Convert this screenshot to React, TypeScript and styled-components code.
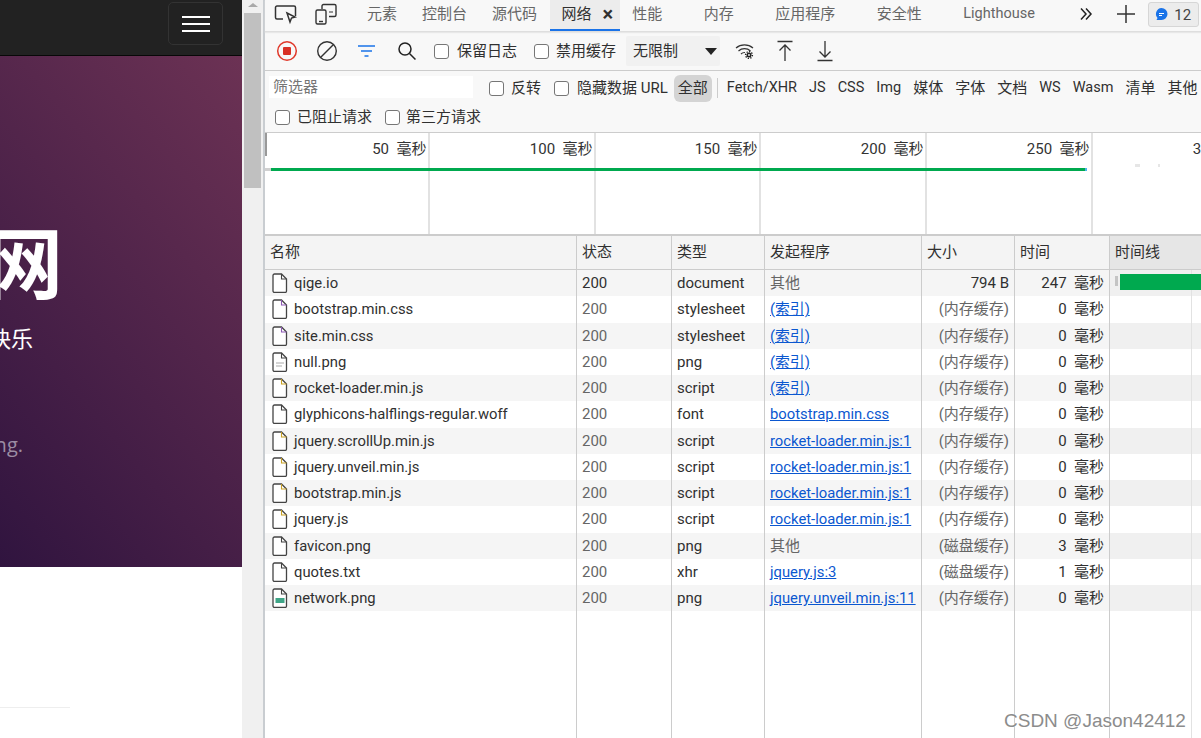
import React from "react";
import styled, {createGlobalStyle} from "styled-components";

const GlobalStyle = createGlobalStyle`
  html, body {
    margin: 0;
    padding: 0;
    width: 1201px;
    height: 738px;
    overflow: hidden;
    background: white;
  }
  * {
    box-sizing: border-box;
  }
`;

const UI_FONT = `Roboto, "Noto Sans CJK SC", sans-serif`;

const Shell = styled.div`
  display: flex;
  width: 1201px;
  height: 738px;
  overflow: hidden;
  font-family: ${UI_FONT};
  font-size: 15px;
  line-height: 20px;
  color: #303030;
`;

/* left: the inspected page */
const Page = styled.div`
  width: 242px;
  height: 738px;
  flex: none;
  display: flex;
  flex-direction: column;
  overflow: hidden;
  background: white;
`;

const NavBar = styled.div`
  height: 56px;
  flex: none;
  display: flex;
  justify-content: flex-end;
  align-items: flex-start;
  padding: 2px 19px 0 0;
  background: #222;
  border-bottom: 1px solid #080808;
`;

const NavToggle = styled.div`
  width: 55px;
  height: 43px;
  display: flex;
  flex-direction: column;
  justify-content: center;
  align-items: center;
  gap: 5px;
  border: 1px solid #333;
  border-radius: 5px;
`;

const NavBarLine = styled.span`
  width: 28px;
  height: 2px;
  background: white;
`;

const Hero = styled.div`
  height: 511px;
  flex: none;
  display: flex;
  flex-direction: column;
  align-items: flex-end;
  padding-top: 164px;
  background: linear-gradient(50deg, #30143f 0%, #6c3254 100%);
  color: white;
  white-space: nowrap;
`;

const HeroTitle = styled.div`
  margin-right: 179px;
  height: 94px;
  font-size: 78px;
  font-weight: 700;
  line-height: 94px;
`;

const HeroSub = styled.div`
  margin: 11px 209px 0 0;
  font-size: 22px;
  line-height: 30px;
`;

const HeroNote = styled.div`
  margin: 76px 219px 0 0;
  font-family: "Open Sans", sans-serif;
  font-size: 20px;
  line-height: 28px;
  color: #9c8da3;
`;

const PageRule = styled.div`
  width: 70px;
  height: 1px;
  margin-top: 140px;
  background: #eee;
`;

const ScrollTrack = styled.div`
  width: 21px;
  flex: none;
  display: flex;
  flex-direction: column;
  align-items: center;
  padding-top: 3px;
  background: #f0f0f0;
`;

const ScrollArrow = styled.span`
  width: 0;
  height: 0;
  border-left: 5px solid transparent;
  border-right: 5px solid transparent;
  border-bottom: 4px solid #a9a9a9;
`;

const ScrollThumb = styled.div`
  width: 17px;
  height: 175px;
  margin-top: 6px;
  background: #c0c0c0;
`;

const Divider = styled.div`
  width: 2px;
  flex: none;
  background: #c9cdd1;
`;

/* right: devtools */
const DevTools = styled.div`
  flex: 1;
  min-width: 0;
  display: flex;
  flex-direction: column;
  background: #f8f8f8;
`;

const TabBar = styled.div`
  height: 32px;
  flex: none;
  display: flex;
  align-items: stretch;
  border-bottom: 1px solid #dedede;
  box-shadow: 0 1px 1px #e8e8e8;
`;

const TabIcon = styled.div<{ $width: number }>`
  width: ${(p) => p.$width}px;
  flex: none;
  display: flex;
  align-items: center;
  justify-content: center;
  padding-bottom: 3px;
`;

const Tab = styled.div<{ $left: number; $right: number; $active?: boolean; $latin?: boolean }>`
  flex: none;
  display: flex;
  align-items: center;
  gap: 11px;
  padding: 0 ${(p) => p.$right}px 1px ${(p) => p.$left}px;
  font-size: ${(p) => (p.$latin ? 14.5 : 15)}px;
  color: ${(p) => (p.$active ? "#303030" : "#666")};
  background: ${(p) => (p.$active ? "#ececec" : "transparent")};
  border-bottom: 2px solid ${(p) => (p.$active ? "#1a73e8" : "transparent")};
`;

const TabClose = styled.span`
  font-size: 20px;
  font-weight: 700;
  line-height: 1;
`;

const Badge = styled.div`
  width: 51px;
  height: 25px;
  margin: 2px 0 0 12px;
  flex: none;
  display: flex;
  align-items: center;
  justify-content: center;
  gap: 6px;
  background: #ececec;
  border: 1px solid #d6d6d6;
  border-radius: 3px;
  color: #444;
`;

const Toolbar = styled.div`
  height: 39px;
  flex: none;
  display: flex;
  align-items: center;
  padding-left: 1.5px;
  border-bottom: 1px solid #ccc;
`;

const ToolButton = styled.div<{ $width: number }>`
  width: ${(p) => p.$width}px;
  flex: none;
  display: flex;
  align-items: center;
  justify-content: center;
`;

const Check = styled.label<{ $gap: number; $before?: number; $after?: number }>`
  display: flex;
  align-items: center;
  flex: none;
  gap: ${(p) => p.$gap}px;
  margin-left: ${(p) => p.$before || 0}px;
  margin-right: ${(p) => p.$after || 0}px;
  white-space: nowrap;
`;

const CheckBox = styled.input.attrs({type: "checkbox"})`
  appearance: none;
  width: 15px;
  height: 15px;
  margin: 0;
  background: white;
  border: 1px solid #767676;
  border-radius: 3px;
`;

const Throttle = styled.div`
  width: 94px;
  height: 30px;
  flex: none;
  display: flex;
  align-items: center;
  justify-content: space-between;
  margin-left: 10px;
  padding: 0 3px 0 7px;
  background: #f1f1f1;
  border-radius: 2px;
`;

const ThrottleArrow = styled.span`
  width: 0;
  height: 0;
  border-left: 6px solid transparent;
  border-right: 6px solid transparent;
  border-top: 7px solid #222;
`;

const FilterRow = styled.div`
  height: 31px;
  flex: none;
  display: flex;
  align-items: center;
  padding: 3px 0 0 4px;
`;

const FilterInput = styled.div`
  width: 204px;
  height: 22px;
  flex: none;
  margin: 0 16px 2px 0;
  padding-left: 4px;
  background: white;
  color: #757575;
  line-height: 22px;
`;

const AllPill = styled.div`
  width: 38px;
  height: 27px;
  flex: none;
  margin-left: 6px;
  background: #d4d4d4;
  border-radius: 6px;
  text-align: center;
  line-height: 27px;
`;

const FilterSeparator = styled.span`
  width: 1px;
  height: 20px;
  flex: none;
  margin: 0 9px 0 5px;
  background: #ccc;
`;

const FilterTypes = styled.div`
  display: flex;
  gap: 12px;
  white-space: nowrap;
`;

const FilterType = styled.span<{ $latin: boolean }>`
  font-size: ${(p) => (p.$latin ? 14.5 : 15)}px;
`;

const BlockedRow = styled.div`
  height: 30px;
  flex: none;
  display: flex;
  align-items: center;
  padding-left: 10px;
`;

const Overview = styled.div`
  position: relative;
  height: 102px;
  flex: none;
  display: flex;
  overflow: hidden;
  background: white;
  border-top: 1px solid #ccc;
`;

const OverviewCell = styled.div<{ $width: number }>`
  width: ${(p) => p.$width}px;
  flex: none;
  padding: 6px 1.5px 0 0;
  border-right: 2px solid #e2e2e2;
  text-align: right;
  white-space: pre;
  color: #333;
`;

const OverviewMark = styled.span`
  position: absolute;
  left: 0;
  top: 0;
  width: 2px;
  height: 23px;
  background: #999;
`;

const OverviewBar = styled.span`
  position: absolute;
  left: 6px;
  top: 35px;
  width: 814px;
  height: 3px;
  background: #00a94f;
`;

const OverviewTick = styled.span<{ $left: number; $width: number; $tone: string; $top: number }>`
  position: absolute;
  left: ${(p) => p.$left}px;
  top: ${(p) => p.$top}px;
  width: ${(p) => p.$width}px;
  height: 3px;
  background: ${(p) => p.$tone};
`;

const Table = styled.div`
  flex: 1;
  min-height: 0;
  display: flex;
  flex-direction: column;
  background: white;
`;

const COLUMNS = "312px 95px 93px 157px 93px 95px 91px";

const HeaderRow = styled.div`
  height: 36px;
  flex: none;
  display: grid;
  grid-template-columns: ${COLUMNS};
  background: #f4f4f4;
  border-top: 2px solid #ccc;
  border-bottom: 1px solid #ccc;
`;

const HeaderCell = styled.div<{ $sorted?: boolean }>`
  padding-left: 5px;
  line-height: 33px;
  border-right: 1px solid #ccc;
  background: ${(p) => (p.$sorted ? "#e6e6e6" : "transparent")};
  &:last-child {
    border-right: none;
  }
`;

const Row = styled.div<{ $striped: boolean }>`
  height: 26.25px;
  flex: none;
  display: grid;
  grid-template-columns: ${COLUMNS};
  background: ${(p) => (p.$striped ? "#f5f5f5" : "white")};
`;

const Cell = styled.div<{ $right?: boolean; $tone?: string }>`
  padding: 0 5px;
  display: flex;
  align-items: center;
  justify-content: ${(p) => (p.$right ? "flex-end" : "flex-start")};
  border-right: 1px solid #ccc;
  color: ${(p) => p.$tone || "#303030"};
  white-space: pre;
  overflow: hidden;
`;

const NameCell = styled(Cell)`
  gap: 6px;
  padding-left: 7px;
  font-size: 14.8px;
`;

const InitiatorLink = styled.span`
  color: #0b57d0;
  font-size: 14.8px;
  text-decoration: underline;
`;

const WaterfallCell = styled.div<{ $striped?: boolean }>`
  position: relative;
  background-image: linear-gradient(#e2e2e2, #e2e2e2);
  background-size: 1px 100%;
  background-position: 81px 0;
  background-repeat: no-repeat;
  background-color: ${(p) => (p.$striped ? "#f0f0f0" : "transparent")};
`;

const WaterfallStub = styled.span`
  position: absolute;
  left: 5px;
  top: 6px;
  width: 3px;
  height: 10px;
  background: #c4c4c4;
`;

const WaterfallBar = styled.span`
  position: absolute;
  left: 10px;
  top: 4px;
  right: 0;
  height: 16px;
  background: #00a94f;
`;

const FillerRow = styled.div`
  flex: 1;
  display: grid;
  grid-template-columns: ${COLUMNS};
`;

const FillerCell = styled.div`
  border-right: 1px solid #ccc;
`;

const Watermark = styled.div`
  position: absolute;
  left: 1004px;
  top: 708px;
  font-family: "Liberation Sans", Arial, sans-serif;
  font-size: 19px;
  line-height: 26px;
  color: #8c8c8c;
  text-shadow: 0 0 2px white;
  white-space: nowrap;
`;

const Frame = styled.div`
  position: relative;
`;

function FileIcon({kind}: { kind?: string }) {
    const fold = kind === "css" ? "#8e5bb5" : kind === "js" ? "#c9a227" : "#444";
    return (
        <svg width="16" height="20" viewBox="0 0 16 20" fill="none" style={{flex: "none"}}>
            <path d="M2.5 1h7l5 5v12a1.5 1.5 0 0 1-1.5 1.5h-10.5a1.5 1.5 0 0 1-1.5-1.500v-15.500a1.5 1.5 0 0 1 1.5-1.5z"
                  fill="white" stroke="#444" strokeWidth="1.3"/>
            <path d="M9.5 1v5h5" stroke={fold} strokeWidth="1.1"/>
            {kind === "null" && <path d="M4 11h8M4 14h6" stroke="#aaa"/>}
            {kind === "image" && <rect x="3.5" y="10" width="9" height="5" fill="#3fa587"/>}
        </svg>
    );
}

const inspectIcon = (
    <svg width="24" height="22" viewBox="0 0 24 22" fill="none" stroke="#333" strokeWidth="1.5">
        <path d="M9 16H3a1.5 1.5 0 0 1-1.5-1.5v-10A1.5 1.5 0 0 1 3 3h17a1.5 1.5 0 0 1 1.5 1.5V13"/>
        <path d="M13 10l8 4-3.5 1-1.5 4z" fill="white"/>
    </svg>
);

const deviceIcon = (
    <svg width="24" height="22" viewBox="0 0 24 22" fill="none" stroke="#333" strokeWidth="1.4">
        <path d="M8 6V3a1.5 1.5 0 0 1 1.5-1.5h11A1.5 1.5 0 0 1 22 3v9a1.5 1.5 0 0 1-1.5 1.5H15"/>
        <rect x="2" y="7" width="10" height="14" rx="1.5"/>
        <path d="M15 9h4" strokeWidth="1"/>
        <path d="M5 18.5h4"/>
    </svg>
);

const recordIcon = (
    <svg width="22" height="22" viewBox="0 0 22 22" fill="none">
        <circle cx="11" cy="11" r="9.3" stroke="#e0392b" strokeWidth="1.5"/>
        <rect x="7" y="7" width="8" height="8" rx="1" fill="#d93025"/>
    </svg>
);

const clearIcon = (
    <svg width="22" height="22" viewBox="0 0 22 22" fill="none" stroke="#333" strokeWidth="1.4">
        <circle cx="11" cy="11" r="9.3"/>
        <path d="M4.5 17.5l13-13"/>
    </svg>
);

const filterIcon = (
    <svg width="20" height="14" viewBox="0 0 20 14" fill="none" stroke="#1a73e8" strokeWidth="1.3">
        <path d="M1 2h17M4 7h11M7.5 12h4"/>
    </svg>
);

const searchIcon = (
    <svg width="20" height="20" viewBox="0 0 20 20" fill="none" stroke="#222" strokeWidth="1.5">
        <circle cx="8" cy="8" r="6"/>
        <path d="M12.5 12.5l6 6"/>
    </svg>
);

const wifiIcon = (
    <svg width="20" height="18" viewBox="0 0 20 18" fill="none" stroke="#333" strokeWidth="1.2">
        <path d="M1 6a13 13 0 0 1 17 0M3.5 9a9 9 0 0 1 12 0M6 12a5 5 0 0 1 4-1.5"/>
        <circle cx="14" cy="13" r="2.5" fill="#222" stroke="none"/>
        <circle cx="14" cy="13" r="3.4" stroke="#222" strokeWidth="1.4" strokeDasharray="1.3 1.3"/>
        <circle cx="14" cy="13" r="0.9" fill="white" stroke="none"/>
    </svg>
);

const uploadIcon = (
    <svg width="18" height="22" viewBox="0 0 18 22" fill="none" stroke="#333" strokeWidth="1.3">
        <path d="M1.5 1.5h15M9 21V5M3.5 10.5L9 5l5.5 5.5"/>
    </svg>
);

const downloadIcon = (
    <svg width="18" height="22" viewBox="0 0 18 22" fill="none" stroke="#333" strokeWidth="1.3">
        <path d="M1.5 20.5h15M9 1v16M3.5 11.5L9 17l5.5-5.5"/>
    </svg>
);

const moreIcon = (
    <svg width="14" height="14" viewBox="0 0 14 14" fill="none" stroke="#222" strokeWidth="1.5">
        <path d="M2 1.5L7 7l-5 5.5M7 1.5L12 7l-5 5.5"/>
    </svg>
);

const plusIcon = (
    <svg width="20" height="20" viewBox="0 0 20 20" fill="none" stroke="#333" strokeWidth="1.5">
        <path d="M1 10h18M10 1v18"/>
    </svg>
);

const messageIcon = (
    <svg width="13" height="13" viewBox="0 0 13 13">
        <path d="M6.5 0a6 6 0 0 1 0 12H1.5l1-2A6 6 0 0 1 6.5 0z" fill="#1a73e8"/>
        <path d="M4 5.5h5M4 7.5h3" stroke="white"/>
    </svg>
);

const leftTabs = ["元素", "控制台", "源代码"];
const rightTabs = ["内存", "应用程序", "安全性", "Lighthouse"];
const filterTypes = ["Fetch/XHR", "JS", "CSS", "Img", "媒体", "字体", "文档", "WS", "Wasm", "清单", "其他"];
const overviewCells = [
    {width: 165, label: "50  毫秒"},
    {width: 166, label: "100  毫秒"},
    {width: 165, label: "150  毫秒"},
    {width: 166, label: "200  毫秒"},
    {width: 166, label: "250  毫秒"},
    {width: 166, label: "300  毫秒"},
];
const overviewTicks = [
    {left: 0, top: 35, width: 6, tone: "#d0d0d0"},
    {left: 820, top: 35, width: 2, tone: "#4db6e8"},
    {left: 870, top: 31, width: 5, tone: "#e6e6e6"},
    {left: 893, top: 31, width: 2, tone: "#e6e6e6"},
];
const headers = ["名称", "状态", "类型", "发起程序", "大小", "时间"];

const isLatin = (text: string) => /^[A-Za-z/]+$/.test(text);

const requests = [
    {name: "qige.io", type: "document", from: "其他", size: "794 B", time: "247  毫秒"},
    {name: "bootstrap.min.css", kind: "css", type: "stylesheet", from: "(索引)", link: true, size: "(内存缓存)", time: "0  毫秒"},
    {name: "site.min.css", kind: "css", type: "stylesheet", from: "(索引)", link: true, size: "(内存缓存)", time: "0  毫秒"},
    {name: "null.png", kind: "null", type: "png", from: "(索引)", link: true, size: "(内存缓存)", time: "0  毫秒"},
    {name: "rocket-loader.min.js", kind: "js", type: "script", from: "(索引)", link: true, size: "(内存缓存)", time: "0  毫秒"},
    {name: "glyphicons-halflings-regular.woff", type: "font", from: "bootstrap.min.css", link: true, size: "(内存缓存)", time: "0  毫秒"},
    {name: "jquery.scrollUp.min.js", kind: "js", type: "script", from: "rocket-loader.min.js:1", link: true, size: "(内存缓存)", time: "0  毫秒"},
    {name: "jquery.unveil.min.js", kind: "js", type: "script", from: "rocket-loader.min.js:1", link: true, size: "(内存缓存)", time: "0  毫秒"},
    {name: "bootstrap.min.js", kind: "js", type: "script", from: "rocket-loader.min.js:1", link: true, size: "(内存缓存)", time: "0  毫秒"},
    {name: "jquery.js", kind: "js", type: "script", from: "rocket-loader.min.js:1", link: true, size: "(内存缓存)", time: "0  毫秒"},
    {name: "favicon.png", type: "png", from: "其他", size: "(磁盘缓存)", time: "3  毫秒"},
    {name: "quotes.txt", type: "xhr", from: "jquery.js:3", link: true, size: "(磁盘缓存)", time: "1  毫秒"},
    {name: "network.png", kind: "image", type: "png", from: "jquery.unveil.min.js:11", link: true, size: "(内存缓存)", time: "0  毫秒"},
];

function App() {
    return (
        <Frame>
            <GlobalStyle/>
            <Shell>
                <Page>
                    <NavBar>
                        <NavToggle>
                            <NavBarLine/>
                            <NavBarLine/>
                            <NavBarLine/>
                        </NavToggle>
                    </NavBar>
                    <Hero>
                        <HeroTitle>网</HeroTitle>
                        <HeroSub>快乐</HeroSub>
                        <HeroNote>ng.</HeroNote>
                    </Hero>
                    <PageRule/>
                </Page>
                <ScrollTrack>
                    <ScrollArrow/>
                    <ScrollThumb/>
                </ScrollTrack>
                <Divider/>
                <DevTools>
                    <TabBar>
                        <TabIcon $width={41}>{inspectIcon}</TabIcon>
                        <TabIcon $width={39}>{deviceIcon}</TabIcon>
                        <TabIcon $width={9.5}/>
                        {leftTabs.map((tab) => (
                            <Tab key={tab} $left={12.5} $right={12.5}>{tab}</Tab>
                        ))}
                        <Tab $left={12} $right={7} $active>
                            网络
                            <TabClose>×</TabClose>
                        </Tab>
                        <Tab $left={12} $right={20.75}>性能</Tab>
                        {rightTabs.map((tab) => (
                            <Tab key={tab} $left={20.75} $right={20.75} $latin={isLatin(tab)}>{tab}</Tab>
                        ))}
                        <TabIcon $width={60}>{moreIcon}</TabIcon>
                        <TabIcon $width={20}>{plusIcon}</TabIcon>
                        <Badge>
                            {messageIcon}
                            12
                        </Badge>
                    </TabBar>
                    <Toolbar>
                        <ToolButton $width={40}>{recordIcon}</ToolButton>
                        <ToolButton $width={40}>{clearIcon}</ToolButton>
                        <ToolButton $width={40}>{filterIcon}</ToolButton>
                        <ToolButton $width={40}>{searchIcon}</ToolButton>
                        <Check $gap={8} $before={7.5} $after={17}>
                            <CheckBox/>
                            保留日志
                        </Check>
                        <Check $gap={7}>
                            <CheckBox/>
                            禁用缓存
                        </Check>
                        <Throttle>
                            无限制
                            <ThrottleArrow/>
                        </Throttle>
                        <ToolButton $width={50}>{wifiIcon}</ToolButton>
                        <ToolButton $width={30}>{uploadIcon}</ToolButton>
                        <ToolButton $width={50}>{downloadIcon}</ToolButton>
                    </Toolbar>
                    <FilterRow>
                        <FilterInput>筛选器</FilterInput>
                        <Check $gap={7} $after={13}>
                            <CheckBox/>
                            反转
                        </Check>
                        <Check $gap={8}>
                            <CheckBox/>
                            隐藏数据 URL
                        </Check>
                        <AllPill>全部</AllPill>
                        <FilterSeparator/>
                        <FilterTypes>
                            {filterTypes.map((type) => (
                                <FilterType key={type} $latin={isLatin(type)}>{type}</FilterType>
                            ))}
                        </FilterTypes>
                    </FilterRow>
                    <BlockedRow>
                        <Check $gap={7} $after={13}>
                            <CheckBox/>
                            已阻止请求
                        </Check>
                        <Check $gap={6}>
                            <CheckBox/>
                            第三方请求
                        </Check>
                    </BlockedRow>
                    <Overview>
                        {overviewCells.map((cell) => (
                            <OverviewCell key={cell.label} $width={cell.width}>{cell.label}</OverviewCell>
                        ))}
                        <OverviewMark/>
                        <OverviewBar/>
                        {overviewTicks.map((tick) => (
                            <OverviewTick key={tick.left} $left={tick.left} $top={tick.top} $width={tick.width}
                                          $tone={tick.tone}/>
                        ))}
                    </Overview>
                    <Table>
                        <HeaderRow>
                            {headers.map((header) => (
                                <HeaderCell key={header}>{header}</HeaderCell>
                            ))}
                            <HeaderCell $sorted>时间线</HeaderCell>
                        </HeaderRow>
                        {requests.map((request, index) => {
                            const striped = index % 2 === 0;
                            const first = index === 0;
                            return (
                                <Row key={request.name} $striped={striped}>
                                    <NameCell>
                                        <FileIcon kind={request.kind}/>
                                        {request.name}
                                    </NameCell>
                                    <Cell $tone={first ? "#303030" : "#666"}>200</Cell>
                                    <Cell>{request.type}</Cell>
                                    <Cell $tone="#666">
                                        {request.link ? <InitiatorLink>{request.from}</InitiatorLink> : request.from}
                                    </Cell>
                                    <Cell $right $tone={first ? "#303030" : "#666"}>{request.size}</Cell>
                                    <Cell $right>{request.time}</Cell>
                                    <WaterfallCell $striped={striped}>
                                        {first && <WaterfallStub/>}
                                        {first && <WaterfallBar/>}
                                    </WaterfallCell>
                                </Row>
                            );
                        })}
                        <FillerRow>
                            {headers.map((header) => (
                                <FillerCell key={header}/>
                            ))}
                            <WaterfallCell/>
                        </FillerRow>
                    </Table>
                </DevTools>
            </Shell>
            <Watermark>CSDN @Jason42412</Watermark>
        </Frame>
    );
}

export default App;
